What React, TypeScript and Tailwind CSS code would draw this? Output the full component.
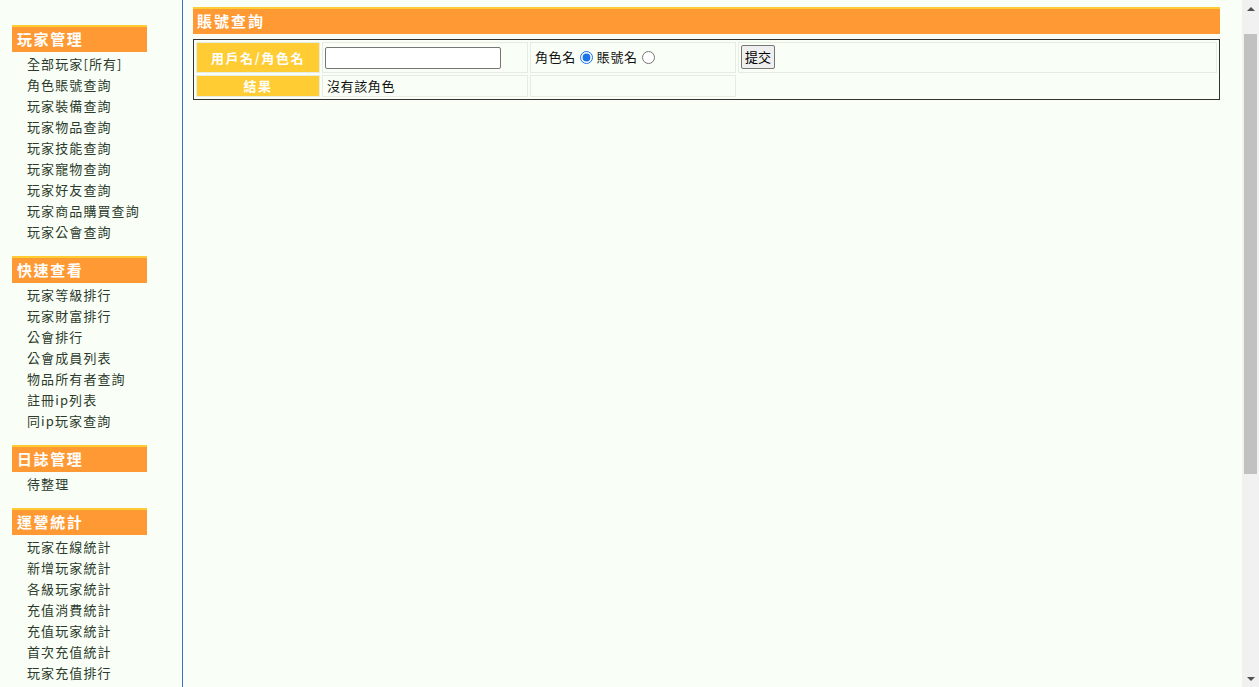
import React from "react";

type Section = { title: string; items: string[] };

const sections: Section[] = [
  {
    title: "玩家管理",
    items: [
      "全部玩家[所有]",
      "角色賬號查詢",
      "玩家裝備查詢",
      "玩家物品查詢",
      "玩家技能查詢",
      "玩家寵物查詢",
      "玩家好友查詢",
      "玩家商品購買查詢",
      "玩家公會查詢",
    ],
  },
  {
    title: "快速查看",
    items: [
      "玩家等級排行",
      "玩家財富排行",
      "公會排行",
      "公會成員列表",
      "物品所有者查詢",
      "註冊ip列表",
      "同ip玩家查詢",
    ],
  },
  { title: "日誌管理", items: ["待整理"] },
  {
    title: "運營統計",
    items: [
      "玩家在線統計",
      "新增玩家統計",
      "各級玩家統計",
      "充值消費統計",
      "充值玩家統計",
      "首次充值統計",
      "玩家充值排行",
    ],
  },
];

function SideMenu() {
  return (
    <aside className="w-[183px] shrink-0 border-r border-[#3a6fd0] pt-[25px]">
      {sections.map((s) => (
        <div key={s.title} className="mb-[14px]">
          <div className="ml-[12px] flex h-[27px] w-[135px] items-center border-t-2 border-[#ffcc33] bg-[#ff9933] pl-[5px] text-[15px] font-bold tracking-[1.6px] text-white">
            {s.title}
          </div>
          <ul className="mt-[1px]">
            {s.items.map((item) => (
              <li
                key={item}
                className="pl-[27px] text-[13px] leading-[21px] tracking-[1.1px] text-[#2c3b2c]"
              >
                {item}
              </li>
            ))}
          </ul>
        </div>
      ))}
    </aside>
  );
}

function Scrollbar() {
  return (
    <div className="flex w-[17px] shrink-0 flex-col bg-[#f1f1f1]">
      <div className="flex h-[17px] items-center justify-center">
        <div className="h-0 w-0 border-x-[4px] border-b-[4px] border-x-transparent border-b-[#505050]" />
      </div>
      <div className="h-[17px]" />
      <div className="mx-[2px] h-[440px] bg-[#c1c1c1]" />
      <div className="flex-1" />
      <div className="flex h-[17px] items-center justify-center">
        <div className="h-0 w-0 border-x-[4px] border-t-[4px] border-x-transparent border-t-[#505050]" />
      </div>
    </div>
  );
}

export default function App() {
  const cell = "border border-[#e6ece2]";
  const label =
    "border border-[#e6ece2] bg-[#ffcc33] text-center text-[13px] font-bold tracking-[1.6px] text-white";

  return (
    <div
      className="flex h-[687px] w-[1259px] overflow-hidden bg-[#f9fff7] text-[#111]"
      style={{ fontFamily: '"Noto Sans CJK TC", "Liberation Sans", sans-serif' }}
    >
      <SideMenu />

      <main className="flex-1 pl-[10px] pr-[22px] pt-[7px]">
        <div className="flex h-[27px] items-center border-t-2 border-[#ffcc33] bg-[#ff9933] pl-[4px] text-[15px] font-bold tracking-[2px] text-white">
          賬號查詢
        </div>

        <table className="mt-[5px] w-full border-separate border-spacing-[2px] border border-[#333] text-[13px] tracking-[0.6px]">
          <tbody>
            <tr className="h-[31px]">
              <td className={`${label} w-[124px]`}>用戶名/角色名</td>
              <td className={`${cell} w-[206px] px-[2px]`}>
                <input
                  type="text"
                  className="block h-[22px] w-[176px] rounded-[2px] border border-[#767676] bg-white px-1"
                />
              </td>
              <td className={`${cell} w-[206px] pl-[4px] pb-[1px]`}>
                <span className="inline-flex items-center">
                  角色名
                  <input type="radio" name="t" defaultChecked className="mx-[4px] h-[13px] w-[13px] accent-[#1a73e8]" />
                  賬號名
                  <input type="radio" name="t" className="mx-[4px] h-[13px] w-[13px]" />
                </span>
              </td>
              <td className={`${cell} align-top pl-[2px] pt-[2px]`}>
                <button className="h-[24px] rounded-[2px] border border-[#767676] bg-[#efefef] px-[3px] text-[13px] tracking-normal text-black">
                  提交
                </button>
              </td>
            </tr>
            <tr className="h-[22px]">
              <td className={label}>結果</td>
              <td className={`${cell} pl-[4px]`}>沒有該角色</td>
              <td className={cell}></td>
            </tr>
          </tbody>
        </table>
      </main>

      <Scrollbar />
    </div>
  );
}
